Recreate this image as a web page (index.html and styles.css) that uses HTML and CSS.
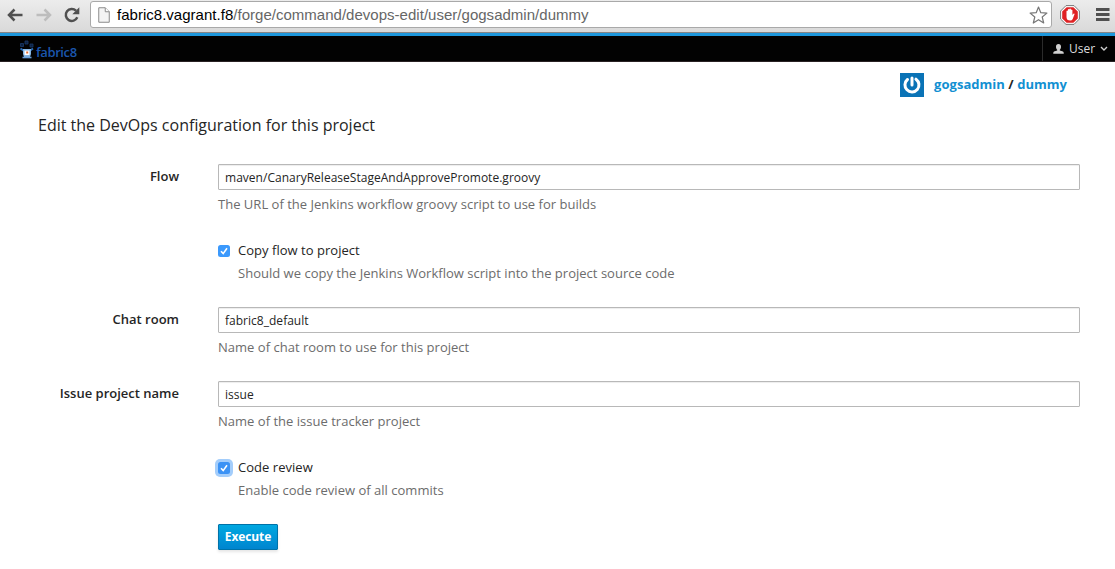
FILE: index.html
```html
<!DOCTYPE html>
<html lang="en">
<head>
<meta charset="utf-8">
<title>fabric8</title>
<link rel="stylesheet" href="styles.css">
</head>
<body>
<header class="toolbar">
  <svg class="nav-icon" width="16" height="14" viewBox="0 0 16 14"><path d="M15.500 7H2M7.500 1.500L2 7l5.500 5.500" fill="none" stroke="#505050" stroke-width="2.500"/></svg>
  <svg class="nav-icon forward" width="16" height="14" viewBox="0 0 16 14"><path d="M.5 7H14M8.500 1.500L14 7l-5.500 5.500" fill="none" stroke="#bdbdbd" stroke-width="2.500"/></svg>
  <svg class="nav-icon reload" width="16" height="16" viewBox="0 0 16 16"><path d="M13.300 10.300A6 6 0 1 1 12 3.600" fill="none" stroke="#505050" stroke-width="2.500"/><path d="M15.300.3v7H8.300z" fill="#505050"/></svg>
  <div class="address">
    <svg class="page-icon" width="12" height="16" viewBox="0 0 12 16"><path d="M.75.75h6.500l4 4v10.500H.75z" fill="#f4f4f4" stroke="#8b8b8b"/><path d="M7.250.75v4h4" fill="#fff" stroke="#8b8b8b"/></svg>
    <span class="url"><span class="host">fabric8.vagrant.f8</span><span class="path">/forge/command/devops-edit/user/gogsadmin/dummy</span></span>
    <svg class="star" width="19" height="18" viewBox="0 0 19 18"><path d="M9.500 1l2.300 5.700 6.100.4-4.700 3.900 1.500 6-5.200-3.300L4.300 17l1.500-6L1.100 7.100l6.100-.4z" fill="#fff" stroke="#777" stroke-width="1.200" stroke-linejoin="round"/></svg>
  </div>
  <svg class="blocker" width="20" height="20" viewBox="0 0 20 20"><path d="M6 .6h8L19.400 6v8L14 19.400H6L.6 14V6z" fill="#fff" stroke="#777"/><path d="M6.600 2.200h6.800l4.400 4.400v6.800l-4.400 4.400H6.600l-4.400-4.400V6.600z" fill="#df2224"/><path d="M6.500 10V6q.8-1 1.400 0v2.500-4q.8-1 1.500 0V8 4q.8-1 1.500 0v4.300V5q.8-1 1.500 0v5l1-1.200q1-.5 1.200.2L12.700 14q-.7 1.500-2.500 1.500Q6.500 15.500 6.500 12z" fill="#fff"/></svg>
  <svg class="menu" width="14" height="13" viewBox="0 0 14 13"><path d="M0 1.500h13.500M0 6.500h13.500M0 11.500h13.500" stroke="#505050" stroke-width="3"/></svg>
</header>
<nav class="navbar">
  <a class="brand">
    <svg class="robot" width="16" height="19" viewBox="0 0 16 19"><g fill="#0d2140" stroke="#1a3b69" stroke-width=".8"><path d="M1.500 3.500h3v3h-3zM6 1h3v3H6zM11 4h3v3h-3z"/></g><path d="M1.500 8.500l3.500 2.500M14 8.500L10.500 11" stroke="#2a6bb5" stroke-width="2"/><path d="M4 9h8v5l-1 3H5l-1-3z" fill="#86b6e2"/><path d="M5.500 10.500h5V15h-5z" fill="#fff"/><path d="M7.200 11.500h2v2h-2z" fill="#e06a32"/><path d="M3.500 17.500h9" stroke="#6a9fd8" stroke-width="1.600"/></svg>
    <span class="brand-name">fabric8</span>
  </a>
  <div class="user">
    <svg width="11" height="10" viewBox="0 0 11 10"><path d="M5.500 0c1.700 0 2.500 1 2.500 2.700C8 4 7.500 5 6.800 5.700v.7L10 7.600q.8.400.8 2.200H.2Q.2 8 1 7.600l3.200-1.200v-.7C3.500 5 3 4 3 2.700 3 1 3.800 0 5.500 0z" fill="#d0d0d0"/></svg>
    <span class="user-name">User</span>
    <svg class="caret" width="8" height="6" viewBox="0 0 8 6"><path d="M1 1l3 3 3-3" fill="none" stroke="#d0d0d0" stroke-width="1.400"/></svg>
  </div>
</nav>
<main class="content">
  <div class="crumbs">
    <svg class="avatar" width="24" height="24" viewBox="0 0 24 24"><path d="M0 0h24v24H0z" fill="#0a73b6"/><path d="M7.500 6.500A7 7 0 1 0 16 6.200" fill="none" stroke="#fff" stroke-width="3" stroke-linecap="round"/><path d="M12 5v7" stroke="#fff" stroke-width="3" stroke-linecap="round"/></svg>
    <span class="trail"><a>gogsadmin</a> / <a>dummy</a></span>
  </div>
  <h1 class="title">Edit the DevOps configuration for this project</h1>
  <form class="form">
    <div class="row">
      <label class="label" for="flow">Flow</label>
      <div class="field"><input class="text" id="flow" type="text" value="maven/CanaryReleaseStageAndApprovePromote.groovy"><p class="help">The URL of the Jenkins workflow groovy script to use for builds</p></div>
    </div>
    <div class="row check-row">
      <svg class="check" width="20" height="20" viewBox="0 0 20 20"><rect x="4" y="4" width="12" height="12" rx="2.500" fill="#3b99fc"/><path d="M7 10.300l2.200 2.300L13 7.300" fill="none" stroke="#fff" stroke-width="1.600"/></svg>
      <div class="field"><span class="check-label">Copy flow to project</span><p class="help">Should we copy the Jenkins Workflow script into the project source code</p></div>
    </div>
    <div class="row">
      <label class="label" for="chat">Chat room</label>
      <div class="field"><input class="text" id="chat" type="text" value="fabric8_default"><p class="help">Name of chat room to use for this project</p></div>
    </div>
    <div class="row">
      <label class="label" for="issue">Issue project name</label>
      <div class="field"><input class="text" id="issue" type="text" value="issue"><p class="help">Name of the issue tracker project</p></div>
    </div>
    <div class="row check-row">
      <svg class="check" width="20" height="20" viewBox="0 0 20 20"><rect x="1" y="1" width="18" height="18" rx="5" fill="#a3cdfb"/><rect x="4" y="4" width="12" height="12" rx="2.500" fill="#3b92f5"/><path d="M7 10.300l2.200 2.300L13 7.300" fill="none" stroke="#fff" stroke-width="1.600"/></svg>
      <div class="field"><span class="check-label">Code review</span><p class="help">Enable code review of all commits</p></div>
    </div>
    <button class="execute" type="button">Execute</button>
  </form>
</main>
</body>
</html>
```
FILE: styles.css
```css
* { box-sizing: border-box; }
body { margin: 0; height: 569px; overflow: hidden; background: #fff; color: #252525; font: 13px/22px "Open Sans", sans-serif; }
svg { display: block; flex: none; }
.toolbar { display: flex; align-items: flex-start; height: 33px; padding-left: 7px; background: linear-gradient(#ececec, #d9d9d9); border-bottom: 1px solid #858585; }
.nav-icon { margin-top: 8px; }
.forward { margin-left: 13px; }
.reload { margin: 7px 0 0 12px; }
.address { display: flex; align-items: center; width: 962px; height: 27px; margin: 1px 0 0 10px; padding: 0 3px 0 7px; background: #fff; border: 1px solid #a9a9a9; border-radius: 3px; }
.url { flex: 1; margin-left: 7px; font: 15px/24px "Liberation Sans", Arial, sans-serif; letter-spacing: .02px; white-space: nowrap; }
.host { color: #000; }
.path { color: #666; }
.blocker { margin: 5px 0 0 8px; }
.menu { margin: 8px 0 0 16px; }
.navbar { display: flex; justify-content: space-between; height: 29px; padding-left: 19px; background: #020202; border-top: 3px solid #1d97dc; border-bottom: 1px solid #292224; }
.brand { display: flex; }
.robot { margin-top: 4px; }
.brand-name { margin: 6px 0 0 1px; color: #1b56ad; font: 600 13px/20px "Open Sans", sans-serif; letter-spacing: -.4px; }
.user { display: flex; align-items: center; width: 73px; padding-left: 10px; border-left: 1px solid #2b2b2b; color: #ddd; font-size: 12px; }
.user-name { margin-left: 5px; }
.caret { margin-left: 5px; }
.content { padding: 11px 35px 0 38px; }
.crumbs { display: flex; justify-content: flex-end; align-items: center; height: 24px; padding-right: 13px; font-weight: 700; }
.trail { margin-left: 10px; padding-bottom: 2px; letter-spacing: .03px; }
.trail a { color: #1290d2; }
.title { margin: 16px 0 27px; font: 400 16px/24px "Open Sans", sans-serif; }
.row { display: flex; height: 74px; }
.label { width: 141px; margin: 1px 39px 0 0; text-align: right; font-weight: 600; }
.field { flex: 1; }
.text { display: block; width: 100%; height: 26px; padding: 1px 6px 0; color: #252525; background: #fff; border: 1px solid #b8b8b8; border-radius: 1px; box-shadow: inset 0 1px 1px rgba(0,0,0,.075); font: 12px/22px "Open Sans", sans-serif; letter-spacing: .02px; outline: none; }
.help { margin: 3px 0 0; color: #6c6c6c; letter-spacing: .015px; }
.check-row { height: 69px; padding: 1px 0 0 176px; }
.check { margin: 2px 4px 0 0; }
.check-row .help { margin: 1px 0 0; }
.check-label { display: block; letter-spacing: .03px; }
.execute { display: block; width: 60px; height: 26px; margin-left: 180px; padding: 0; color: #fff; background: linear-gradient(#00a8e1, #0085cf); border: 1px solid #0072a8; border-radius: 1px; box-shadow: 0 2px 3px rgba(0,0,0,.1); font: 700 12px/22px "Open Sans", sans-serif; letter-spacing: -.1px; }
```
